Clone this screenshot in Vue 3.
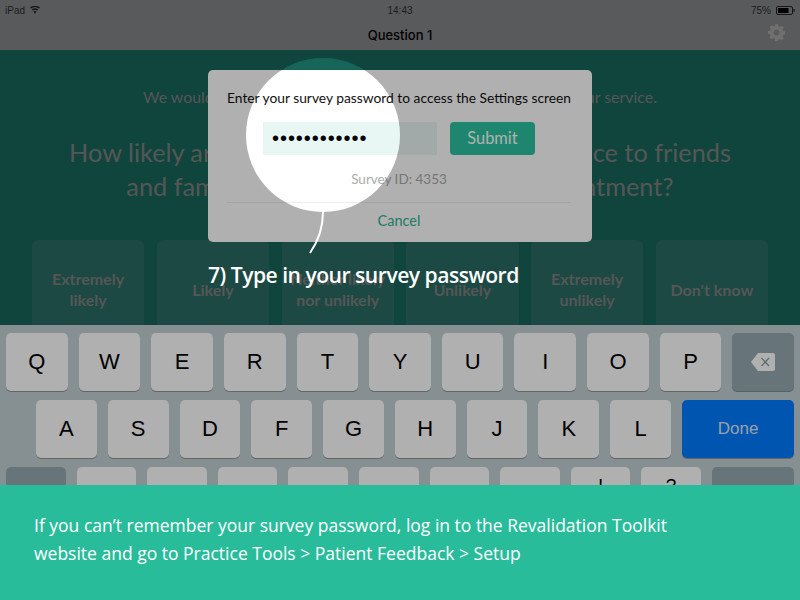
<script setup>
const answers = ['Extremely likely', 'Likely', 'Neither likely nor unlikely', 'Unlikely', 'Extremely unlikely', "Don't know"]
const row1 = ['Q', 'W', 'E', 'R', 'T', 'Y', 'U', 'I', 'O', 'P']
const row2 = ['A', 'S', 'D', 'F', 'G', 'H', 'J', 'K', 'L']
const row3 = ['', '', '', '', '', '', '', '!', '?']
</script>

<template>
  <div class="page">
    <div class="tablet">
      <div class="status">
        <div class="status-left">
          <span>iPad</span>
          <svg width="10" height="8" viewBox="0 0 11 9"><path d="M5.5 8.6 3.7 6.3a3 3 0 0 1 3.6 0zM2.8 5.2 1.9 4a6 6 0 0 1 7.2 0l-.9 1.2a4.4 4.4 0 0 0-5.4 0zM1 2.9 0 1.7a8.6 8.6 0 0 1 11 0l-1 1.2a7 7 0 0 0-9 0z" fill="#222"/></svg>
        </div>
        <span class="clock">14:43</span>
        <div class="status-right">
          <span>75%</span>
          <svg width="19" height="9" viewBox="0 0 19 9"><rect x=".5" y=".5" width="16" height="8" rx="1.5" fill="none" stroke="#222"/><rect x="2" y="2" width="10.500" height="5" fill="#000"/><rect x="17.500" y="3" width="1.200" height="3" fill="#222"/></svg>
        </div>
      </div>
      <div class="nav">
        <span class="nav-title">Question 1</span>
        <svg class="gear" width="17" height="17" viewBox="0 0 24 24"><path fill-rule="evenodd" fill="#a2a2a2" d="M10 0h4l.7 3.3 2 .8L19.500 2.300l2.800 2.800-1.800 2.800.8 2 3.300.7v4l-3.300.7-.8 2 1.800 2.800-2.800 2.800-2.800-1.800-2 .8L14 24h-4l-.7-3.300-2-.8-2.800 1.800-2.800-2.800 1.800-2.800-.8-2L0 14v-4l3.300-.7.8-2L2.300 4.500l2.800-2.800L7.900 3.500l2-.8zM12 8a4 4 0 1 0 0 8 4 4 0 0 0 0-8z"/></svg>
      </div>
      <div class="survey">
        <p class="lead">We would like your feedback to help us improve the quality of our service.</p>
        <h1 class="question">How likely are you to recommend our GP practice to friends<br>and family <span class="tight">if they needed similar care or</span> treatment?</h1>
        <div class="answers">
          <div v-for="a in answers" :key="a" class="answer">{{ a }}</div>
        </div>
      </div>
      <div class="keyboard">
        <div class="kb-row">
          <div v-for="k in row1" :key="k" class="key">{{ k }}</div>
          <div class="key dark">
            <svg width="24" height="18" viewBox="0 0 24 18"><path d="M7 0h15a2 2 0 0 1 2 2v14a2 2 0 0 1-2 2H7L0 9z" fill="#fff"/><path d="M10.500 5l7.500 8M18 5l-7.500 8" stroke="#8a9ba2" stroke-width="1.300" fill="none"/></svg>
          </div>
        </div>
        <div class="kb-row second">
          <div v-for="k in row2" :key="k" class="key">{{ k }}</div>
          <div class="key done">Done</div>
        </div>
        <div class="kb-row third">
          <div class="key dark"></div>
          <div v-for="(k, i) in row3" :key="i" class="key punct">{{ k }}</div>
          <div class="key dark wide"></div>
        </div>
      </div>

      <div class="modal">
        <p class="modal-title">Enter your survey password to access the Settings screen</p>
        <div class="modal-form">
          <div class="pw">••••••••••••</div>
          <div class="submit">Submit</div>
        </div>
        <p class="survey-id">Survey ID: 4353</p>
        <div class="cancel">Cancel</div>
      </div>
    </div>

    <div class="dimmer"><div class="hole"></div></div>

    <svg class="pointer" width="30" height="48" viewBox="0 0 30 48"><path d="M23 0C23 14 19 28 10 41" fill="none" stroke="#fff" stroke-width="2"/></svg>
    <div class="callout">7) Type in your survey password</div>

    <footer class="footer">
      If you can’t remember your survey password, log in to the Revalidation Toolkit<br>
      website and go to Practice Tools &gt; Patient Feedback &gt; Setup
    </footer>
  </div>
</template>

<style>
html, body { margin: 0; }
</style>

<style scoped>
.page {
  position: relative;
  width: 800px;
  height: 600px;
  overflow: hidden;
  display: flex;
  flex-direction: column;
  font-family: Lato, sans-serif;
}
.tablet {
  position: relative;
  height: 485px;
  overflow: hidden;
}
.status {
  height: 20px;
  background: #818385;
  display: flex;
  align-items: center;
  justify-content: space-between;
  padding: 0 5px;
  font: 10px "Liberation Sans", sans-serif;
  color: #2c2c2c;
  position: relative;
}
.status-left, .status-right { display: flex; align-items: center; gap: 5px; }
.clock { position: absolute; left: 0; right: 0; text-align: center; }
.nav {
  height: 30px;
  background: #818385;
  display: flex;
  align-items: center;
  justify-content: center;
  position: relative;
}
.nav-title { font: 500 13px Inter, sans-serif; color: #000; }
.gear { position: absolute; right: 15px; top: 4px; }
.survey {
  height: 275px;
  background: #176459;
  overflow: hidden;
  text-align: center;
  color: #7d7d7d;
  box-sizing: border-box;
  padding-top: 37px;
}
.lead { margin: 0; font-size: 15.900px; line-height: 20px; }
.question { margin: 28px 0 0; font-weight: 400; font-size: 25.300px; line-height: 34px; }
.tight { word-spacing: -4px; }
.answers { display: flex; gap: 12.500px; padding: 0 32px; margin-top: 37px; }
.answer {
  flex: 1;
  height: 100px;
  background: #296b63;
  border-radius: 6px;
  box-sizing: border-box;
  padding: 0 8px 2px;
  display: flex;
  align-items: center;
  justify-content: center;
  font-weight: 700;
  font-size: 16px;
  line-height: 21px;
}
.keyboard {
  height: 160px;
  background: #c2cfd2;
  box-sizing: border-box;
  padding: 8px 6px 0;
  overflow: hidden;
  display: flex;
  flex-direction: column;
  gap: 9px;
}
.kb-row { display: flex; gap: 11px; height: 58px; flex: none; }
.kb-row.second { padding-left: 30px; }
.key {
  flex: 1 1 0;
  min-width: 0;
  background: #fff;
  border-radius: 5px;
  box-shadow: 0 1px 0 #8f9597;
  display: flex;
  align-items: center;
  justify-content: center;
  font: 22px "Liberation Sans", sans-serif;
  color: #000;
}
.key.punct { align-items: flex-start; padding-top: 9px; box-sizing: border-box; font-size: 19px; line-height: 20px; }
.key.dark { background: #95a9b1; box-shadow: 0 1px 0 #7f8f95; }
.key.done {
  flex: 0 0 112px;
  background: #007cff;
  color: #dfe9f7;
  font-size: 17px;
}
.key.wide { flex: 0 0 82px; }
.modal {
  position: absolute;
  left: 208px;
  top: 70px;
  width: 384px;
  height: 172px;
  box-sizing: border-box;
  background: #fff;
  border-radius: 5px;
  padding: 20px 21px 0 19px;
  text-align: center;
}
.modal-title { margin: 0; font-size: 13.800px; line-height: 16px; color: #111; white-space: nowrap; }
.modal-form { display: flex; gap: 13px; margin: 16px 36px 0; }
.pw {
  flex: none;
  width: 174px;
  height: 33px;
  background: #e9f7f4;
  text-align: left;
  padding-left: 9px;
  box-sizing: border-box;
  font: 20px/33px "Liberation Sans", sans-serif;
  letter-spacing: 0.950px;
  color: #000;
}
.submit {
  flex: none;
  width: 85px;
  height: 33px;
  background: #2cc3a0;
  border-radius: 4px;
  color: #fff;
  font-size: 16.400px;
  line-height: 31px;
}
.survey-id { margin: 15px 0 14px; font-size: 13.500px; line-height: 18px; color: #ababab; }
.cancel {
  border-top: 1px solid #eee;
  padding-top: 9px;
  font-size: 14.500px;
  line-height: 18px;
  color: #2cb594;
}
.dimmer {
  position: absolute;
  left: 0;
  top: 0;
  width: 800px;
  height: 485px;
  overflow: hidden;
  pointer-events: none;
}
.hole {
  position: absolute;
  left: 246px;
  top: 58px;
  width: 154px;
  height: 154px;
  border-radius: 50%;
  box-shadow: 0 0 0 800px rgba(0, 0, 0, 0.31);
}
.pointer { position: absolute; left: 300px; top: 212px; }
.callout {
  position: absolute;
  left: 208px;
  top: 260px;
  font-family: "Open Sans", sans-serif;
  font-weight: 600;
  font-size: 21.100px;
  letter-spacing: -0.500px;
  line-height: 30px;
  color: #fff;
  white-space: nowrap;
}
.footer {
  height: 115px;
  background: #29bc9b;
  box-sizing: border-box;
  padding: 26px 34px 0;
  font-family: "Open Sans", sans-serif;
  font-size: 17.500px;
  line-height: 28px;
  color: #fff;
  position: relative;
}
</style>
